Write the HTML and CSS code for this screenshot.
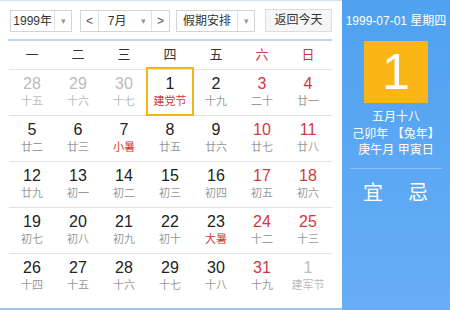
FILE: index.html
```html
<!DOCTYPE html>
<html lang="zh-CN">
<head>
	<meta charset="UTF-8">
	<title>万年历</title>
	<link rel="stylesheet" href="styles.css">
</head>
<body>
	<div class="calendar">
		<div class="main">
			<div class="toolbar">
				<div class="select year">
					<span class="val">1999年</span>
					<span class="arrow">&#9662;</span>
				</div>
				<div class="select month">
					<span class="step">&lt;</span>
					<span class="val">7月</span>
					<span class="arrow">&#9662;</span>
					<span class="step">&gt;</span>
				</div>
				<div class="select holiday">
					<span class="val">假期安排</span>
					<span class="arrow">&#9662;</span>
				</div>
				<div class="today-btn">返回今天</div>
			</div>

			<div class="week">
				<span>一</span><span>二</span><span>三</span><span>四</span><span>五</span>
				<span class="red">六</span><span class="red">日</span>
			</div>

			<div class="row">
				<div class="day other"><b>28</b><i>十五</i></div>
				<div class="day other"><b>29</b><i>十六</i></div>
				<div class="day other"><b>30</b><i>十七</i></div>
				<div class="day current"><b>1</b><i class="fest">建党节</i></div>
				<div class="day"><b>2</b><i>十九</i></div>
				<div class="day weekend"><b>3</b><i>二十</i></div>
				<div class="day weekend"><b>4</b><i>廿一</i></div>
			</div>
			<div class="row">
				<div class="day"><b>5</b><i>廿二</i></div>
				<div class="day"><b>6</b><i>廿三</i></div>
				<div class="day"><b>7</b><i class="fest">小暑</i></div>
				<div class="day"><b>8</b><i>廿五</i></div>
				<div class="day"><b>9</b><i>廿六</i></div>
				<div class="day weekend"><b>10</b><i>廿七</i></div>
				<div class="day weekend"><b>11</b><i>廿八</i></div>
			</div>
			<div class="row">
				<div class="day"><b>12</b><i>廿九</i></div>
				<div class="day"><b>13</b><i>初一</i></div>
				<div class="day"><b>14</b><i>初二</i></div>
				<div class="day"><b>15</b><i>初三</i></div>
				<div class="day"><b>16</b><i>初四</i></div>
				<div class="day weekend"><b>17</b><i>初五</i></div>
				<div class="day weekend"><b>18</b><i>初六</i></div>
			</div>
			<div class="row">
				<div class="day"><b>19</b><i>初七</i></div>
				<div class="day"><b>20</b><i>初八</i></div>
				<div class="day"><b>21</b><i>初九</i></div>
				<div class="day"><b>22</b><i>初十</i></div>
				<div class="day"><b>23</b><i class="fest">大暑</i></div>
				<div class="day weekend"><b>24</b><i>十二</i></div>
				<div class="day weekend"><b>25</b><i>十三</i></div>
			</div>
			<div class="row last">
				<div class="day"><b>26</b><i>十四</i></div>
				<div class="day"><b>27</b><i>十五</i></div>
				<div class="day"><b>28</b><i>十六</i></div>
				<div class="day"><b>29</b><i>十七</i></div>
				<div class="day"><b>30</b><i>十八</i></div>
				<div class="day weekend"><b>31</b><i>十九</i></div>
				<div class="day other"><b>1</b><i>建军节</i></div>
			</div>
		</div>

		<div class="side">
			<div class="side-date">1999-07-01 星期四</div>
			<div class="big-day">1</div>
			<div class="lunar">
				<p>五月十八</p>
				<p>己卯年 【兔年】</p>
				<p>庚午月 甲寅日</p>
			</div>
			<div class="yiji">
				<span>宜</span>
				<span>忌</span>
			</div>
		</div>
	</div>
</body>
</html>
```

FILE: styles.css
```css
html, body, div, p, span {
	margin: 0;
	padding: 0;
}
body {
	background: #fff;
	font-family: "Liberation Sans", Arial, "Noto Sans CJK SC", sans-serif;
	color: #333;
}
b, i {
	font-weight: normal;
	font-style: normal;
}

.calendar {
	display: flex;
	width: 450px;
	height: 310px;
	box-sizing: border-box;
	border-top: 1px solid #cfe0f2;
	border-bottom: 2px solid #9fc6ec;
}

/* 左侧日历 */
.main {
	width: 342px;
	box-sizing: border-box;
	padding: 0 10px 0 9px;
}
.toolbar {
	display: flex;
	align-items: center;
	height: 38px;
	padding: 0 0 0 2px;
	border-bottom: 2px solid #bed8f0;
	margin-left: -1px;
}
.select {
	display: flex;
	height: 22px;
	box-sizing: border-box;
	border: 1px solid #d4d4d4;
	font-size: 12px;
	line-height: 20px;
	color: #333;
	background: #fff;
}
.select span {
	display: block;
	text-align: center;
}
.select .arrow {
	border-left: 1px solid #e2e2e2;
	color: #999;
	font-size: 9px;
	width: 16px;
}
.year {
	width: 62px;
	margin-top: 1px;
}
.year .val {
	width: 44px;
}
.month {
	width: 90px;
	margin-left: 8px;
	margin-top: 1px;
}
.month .step {
	width: 17px;
	color: #555;
}
.month .step:first-child {
	border-right: 1px solid #e2e2e2;
}
.month .val {
	width: 37px;
}
.month .arrow {
	border-left: none;
	border-right: 1px solid #e2e2e2;
	width: 16px;
}
.holiday {
	width: 79px;
	margin-left: 6px;
	margin-top: 1px;
}
.holiday .val {
	width: 61px;
}
.today-btn {
	width: 68px;
	height: 23px;
	box-sizing: border-box;
	margin-left: 10px;
	margin-top: 1px;
	border: 1px solid #dcdcdc;
	background: #f6f6f6;
	font-size: 12px;
	line-height: 21px;
	text-align: center;
	color: #333;
}

.week {
	display: grid;
	grid-template-columns: repeat(7, 46px);
	height: 28px;
	line-height: 28px;
	border-bottom: 1px solid #e6e6e6;
	font-size: 13px;
	text-align: center;
	color: #333;
}
.red {
	color: #d4373f;
}

.row {
	display: grid;
	grid-template-columns: repeat(7, 46px);
	height: 46px;
	box-sizing: border-box;
	border-bottom: 1px solid #e2e2e2;
}
.row.last {
	border-bottom: none;
}
.day {
	text-align: center;
	padding-top: 5px;
	box-sizing: border-box;
}
.day b {
	display: block;
	font-size: 16px;
	line-height: 18px;
	color: #222;
}
.day i {
	display: block;
	font-size: 11px;
	line-height: 16px;
	color: #999;
}
.day.weekend b {
	color: #d4373f;
}
.day.other b,
.day.other i {
	color: #bbb;
}
.day i.fest {
	color: #cf3a3a;
}
.day.current {
	outline: 2px solid #f2b418;
	outline-offset: -1px;
	margin-top: -2px;
	padding-top: 7px;
	height: 47px;
	position: relative;
}

/* 右侧详情 */
.side {
	flex: 1;
	background: linear-gradient(#4ea2f0, #68adf6);
	color: #fff;
	text-align: center;
	margin-top: -1px;
	margin-bottom: -2px;
}
.side-date {
	font-size: 12px;
	margin-top: 14px;
	line-height: 14px;
}
.big-day {
	width: 64px;
	height: 62px;
	margin: 13px auto 0;
	background: #fbb514;
	font-size: 50px;
	line-height: 62px;
	color: #fff;
}
.lunar {
	margin-top: 6px;
	font-size: 12px;
	line-height: 16.5px;
}
.yiji {
	display: flex;
	justify-content: space-between;
	margin: 9px 8px 0;
	padding: 12px 14px 0 13px;
	border-top: 1px solid #8cc3f5;
	font-size: 20px;
	line-height: 24px;
}
```
